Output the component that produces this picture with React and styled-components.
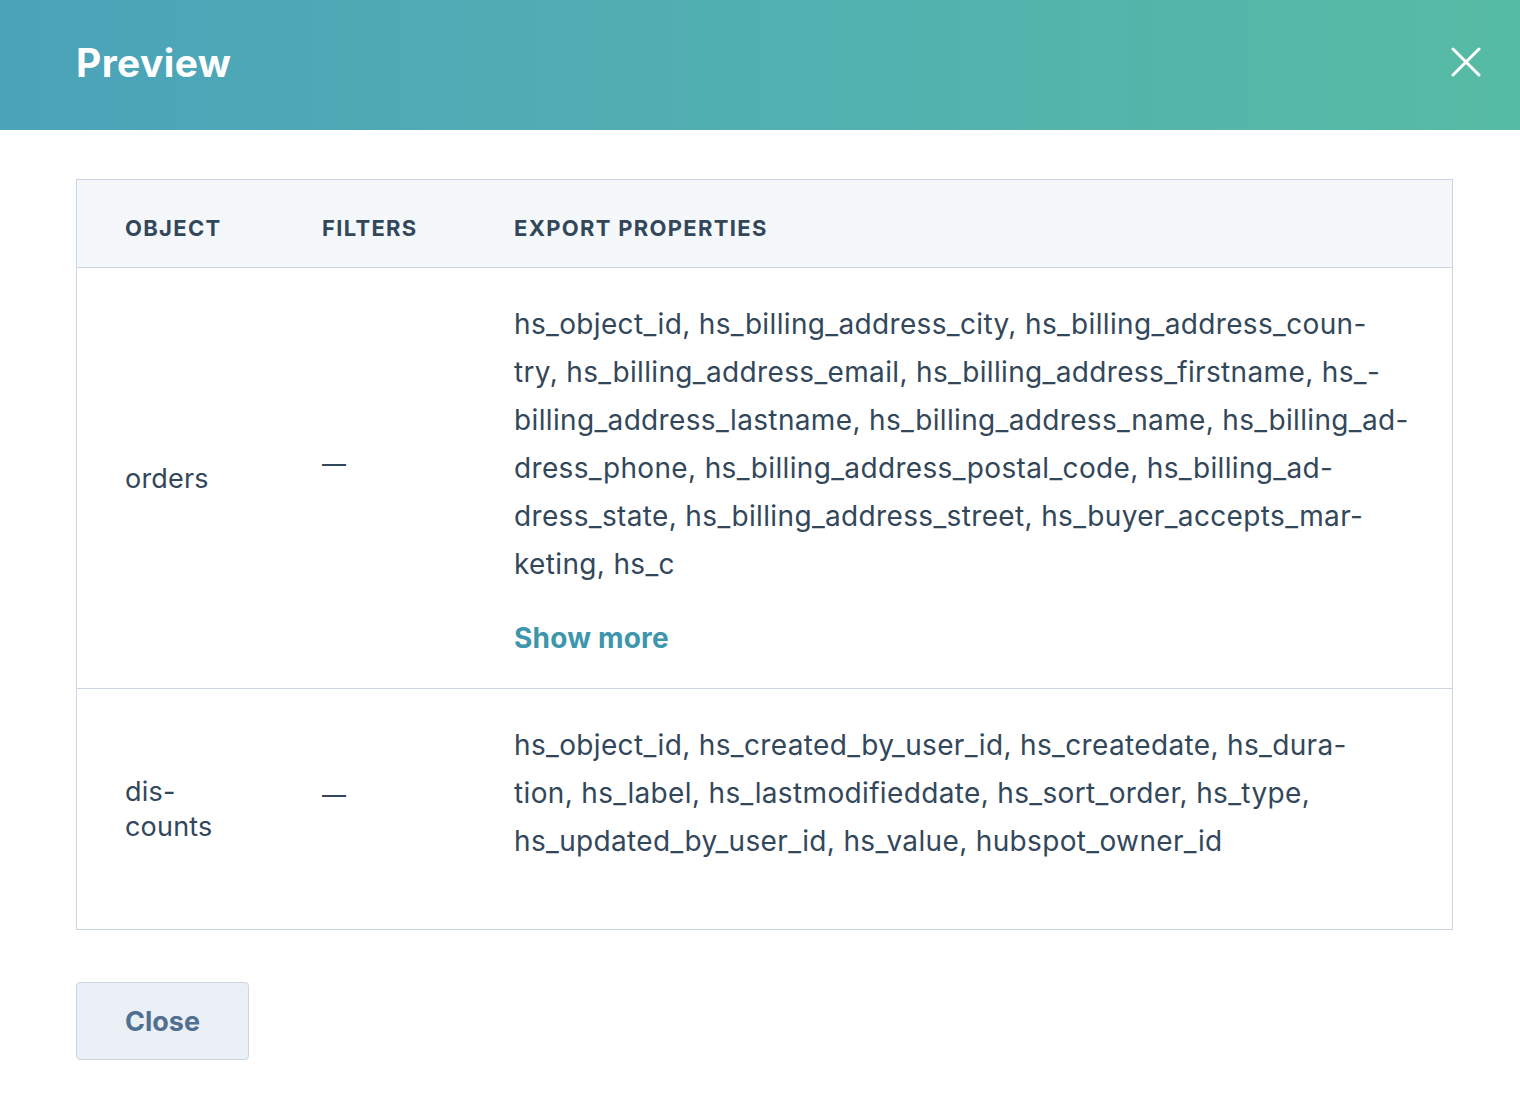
import React from "react";
import styled, { createGlobalStyle } from "styled-components";

const Global = createGlobalStyle`
  html, body { margin: 0; padding: 0; background: #ffffff; }
  body { font-family: Inter, "Noto Sans", sans-serif; color: #33475b; }
`;

const Modal = styled.div`
  width: 1520px;
  min-height: 1100px;
  background: #ffffff;
  display: flex;
  flex-direction: column;
`;

const Header = styled.header`
  height: 130px;
  box-sizing: border-box;
  padding: 0 30px 6px 76px;
  display: flex;
  align-items: center;
  justify-content: space-between;
  background: linear-gradient(90deg, #4ba3b9 0%, #51b0b1 50%, #56bba4 100%);
`;

const Title = styled.h1`
  margin: 0;
  font-family: Inter, sans-serif;
  font-weight: 700;
  font-size: 39px;
  letter-spacing: 0.4px;
  color: #ffffff;
`;

const CloseIcon = styled.button`
  width: 48px;
  height: 48px;
  padding: 0;
  border: 0;
  background: transparent;
  display: flex;
  align-items: center;
  justify-content: center;
  cursor: pointer;
`;

const Body = styled.main`
  padding: 49px 67px 0 76px;
  display: flex;
  flex-direction: column;
  gap: 52px;
`;

const Table = styled.div`
  border: 1px solid #cbd6e2;
  display: grid;
  grid-template-columns: 197px 192px minmax(0, 1fr);
`;

const HeadCell = styled.div`
  background: #f5f8fa;
  height: 88px;
  padding-left: 48px;
  display: flex;
  align-items: center;
  padding-top: 8px;
  box-sizing: border-box;
  border-bottom: 1px solid #cbd6e2;
  font-family: Inter, sans-serif;
  font-weight: 700;
  font-size: 22px;
  letter-spacing: 1.3px;
  text-transform: uppercase;
  color: #33475b;
`;

const Cell = styled.div`
  padding: 32px 40px 32px 48px;
  min-width: 0;
  display: flex;
  flex-direction: column;
  justify-content: ${(p) => (p.$top ? "flex-start" : "center")};
  border-bottom: ${(p) => (p.$last ? "0" : "1px solid #cbd6e2")};
  font-size: 27px;
  line-height: 35px;
  letter-spacing: 0.2px;
  color: #33475b;
`;

const Dash = styled.span`
  display: block;
  margin-top: -30px;
  font-size: 24px;
`;

const Props = styled.p`
  margin: 0 0 32px;
  font-size: 28px;
  line-height: 48px;
  letter-spacing: 0.35px;
  white-space: nowrap;
`;

const ShowMore = styled.a`
  display: block;
  height: 36px;
  line-height: 36px;
  font-weight: 700;
  font-size: 28px;
  letter-spacing: 0.2px;
  color: #3d96ab;
  text-decoration: none;
  cursor: pointer;
`;

const Footer = styled.div`
  display: flex;
`;

const Button = styled.button`
  width: 173px;
  height: 78px;
  box-sizing: border-box;
  border: 1px solid #cbd6e2;
  border-radius: 4px;
  background: #eaf0f6;
  color: #516f90;
  font-family: Inter, sans-serif;
  font-weight: 700;
  font-size: 27px;
  cursor: pointer;
`;

const rows = [
  {
    object: ["orders"],
    lines: [
      "hs_object_id, hs_billing_address_city, hs_billing_address_coun-",
      "try, hs_billing_address_email, hs_billing_address_firstname, hs_-",
      "billing_address_lastname, hs_billing_address_name, hs_billing_ad-",
      "dress_phone, hs_billing_address_postal_code, hs_billing_ad-",
      "dress_state, hs_billing_address_street, hs_buyer_accepts_mar-",
      "keting, hs_c",
    ],
    more: true,
  },
  {
    object: ["dis-", "counts"],
    lines: [
      "hs_object_id, hs_created_by_user_id, hs_createdate, hs_dura-",
      "tion, hs_label, hs_lastmodifieddate, hs_sort_order, hs_type,",
      "hs_updated_by_user_id, hs_value, hubspot_owner_id",
    ],
    more: false,
  },
];

export default function App() {
  return (
    <Modal>
      <Global />
      <Header>
        <Title>Preview</Title>
        <CloseIcon aria-label="Close">
          <svg width="30" height="30" viewBox="0 0 30 30">
            <path d="M2 2 L28 28 M28 2 L2 28" stroke="#ffffff" strokeWidth="3" strokeLinecap="round" />
          </svg>
        </CloseIcon>
      </Header>
      <Body>
        <Table>
          <HeadCell>Object</HeadCell>
          <HeadCell>Filters</HeadCell>
          <HeadCell>Export properties</HeadCell>
          {rows.map((r, i) => {
            const last = i === rows.length - 1;
            return (
              <React.Fragment key={i}>
                <Cell $last={last}>
                  {r.object.map((o) => (
                    <span key={o}>{o}</span>
                  ))}
                </Cell>
                <Cell $last={last}>
                  <Dash>—</Dash>
                </Cell>
                <Cell $last={last} $top>
                  <Props>
                    {r.lines.map((l, j) => (
                      <React.Fragment key={j}>
                        {l}
                        {j < r.lines.length - 1 && <br />}
                      </React.Fragment>
                    ))}
                  </Props>
                  {r.more && <ShowMore>Show more</ShowMore>}
                </Cell>
              </React.Fragment>
            );
          })}
        </Table>
        <Footer>
          <Button>Close</Button>
        </Footer>
      </Body>
    </Modal>
  );
}
